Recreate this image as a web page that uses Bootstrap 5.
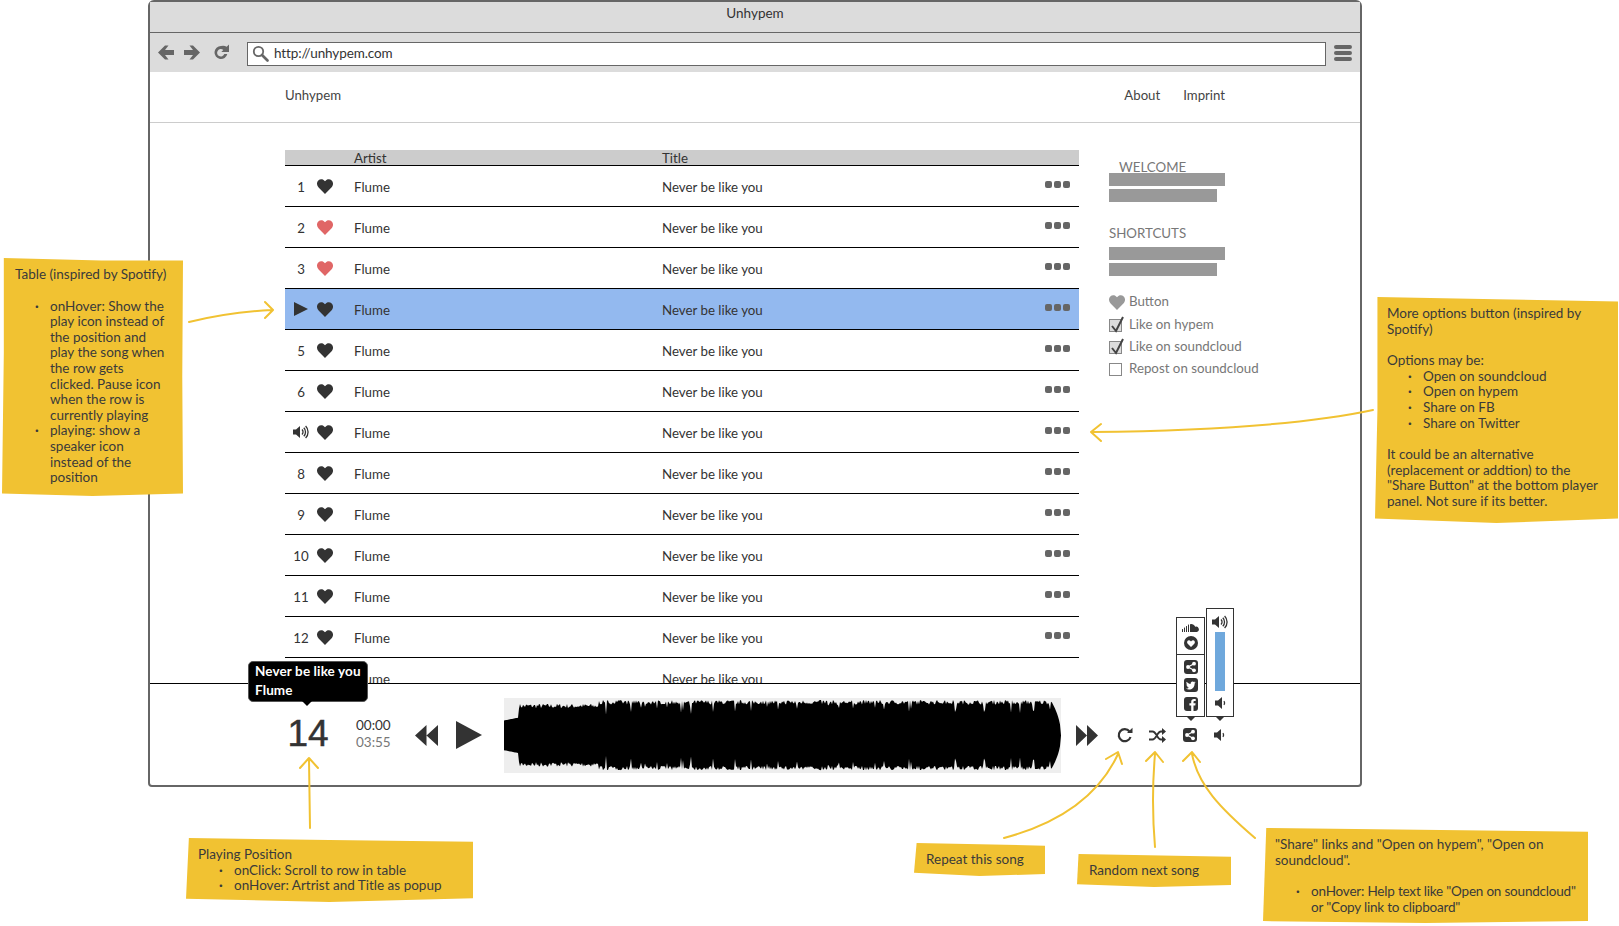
<!DOCTYPE html>
<html lang="en">
<head>
  <meta charset="UTF-8">
  <title>Unhypem</title>
  <link rel="stylesheet" href="https://cdn.jsdelivr.net/npm/bootstrap@5.3.3/dist/css/bootstrap.min.css">
  <style>
    html, body { margin: 0; background: #fff; overflow: hidden; }
    body, .wf-canvas { font-family: "Lato", "Liberation Sans", sans-serif; font-size: 13.5px; color: #333; }
    .wf-canvas { position: relative; width: 1619px; height: 926px; overflow: hidden; }

    /* browser window */
    .wf-window { position: absolute; left: 148px; top: 0; width: 1214px; height: 787px; border: 2px solid #666; border-radius: 6px 6px 4px 4px; background: #fff; }
    .wf-title { height: 31px; background: #dcdcdc; border-bottom: 1px solid #666; color: #333; padding-top: 1px; }
    .wf-toolbar { height: 39px; background: #dcdcdc; padding: 8px 8px 6px 8px; }
    .wf-url { width: 1080px; height: 24px; background: #fff; border: 1px solid #666; margin-left: 89px; }
    .wf-url span { line-height: 20px; letter-spacing: -.1px; margin: -2px 0 0 1px; }
    .wf-menu { margin-top: -2px; }
    .wf-nav { height: 51px; border-bottom: 1px solid #ccc; padding: 0 135px 2px; color: #555; font-size: 13.2px; }
    .wf-nav a { color: #444; text-decoration: none; }
    .wf-nav a + a { margin-left: 23px; }
    .wf-main { height: 560px; overflow: hidden; padding: 27px 0 0 135px; }
    .wf-tablewrap { width: 794px; flex: none; }

    .wf-table { width: 794px; table-layout: fixed; margin: 0; --bs-table-bg: transparent; color: #333; font-size: 13.3px; }
    .wf-table th { height: 15px; padding: 0; background: #ccc; font-weight: 400; line-height: 14px; border-bottom: 1px solid #000; vertical-align: bottom; color: #333; }
    .wf-table td { height: 41px; padding: 3px 0 0 0; border-bottom: 1px solid #000; vertical-align: middle; color: #333; line-height: 20px; }
    .wf-table tr.wf-hover td { background: #93b9ef; }
    .wf-table td svg { display: block; margin-top: -2px; }
    .wf-dots { display: flex; gap: 2px; justify-content: flex-end; padding-right: 9px; margin-top: -5px; }
    .wf-dots i { width: 7px; height: 7px; border-radius: 2px; background: #666; }
    .wf-pos { display: flex; justify-content: center; }

    .wf-side { width: 190px; margin-left: 30px; padding-top: 9px; color: #777; flex: none; font-size: 13.3px; }
    .wf-side p { margin: 0; line-height: 16px; }
    .wf-welcome { margin-left: 10px !important; }
    .wf-shortcuts { margin: 23px 0 6px !important; }
    .wf-bar { height: 13px; background: #999; margin-bottom: 3px; }
    .wf-bar.wf-long { width: 116px; }
    .wf-bar.wf-short { width: 108px; }
    .wf-bar.wf-first { margin-top: -2px; }
    .wf-check { height: 22px; gap: 7px; }
    .wf-check-first { margin-top: 15px; margin-bottom: 1px; gap: 4px; }
    .wf-box { width: 13px; height: 13px; border: 1px solid #888; background: #fff; position: relative; flex: none; }
    .wf-box.wf-on { background: #ddd; }
    .wf-box svg { position: absolute; left: 0; top: -4px; }

    /* player */
    .wf-player { position: relative; height: 102px; border-top: 1px solid #000; padding-left: 136px; }
    .wf-num { width: 44px; margin-top: 31px; font-size: 37px; line-height: 38px; color: #333; text-align: center; font-family: "Liberation Sans", sans-serif; -webkit-text-stroke: .5px #333; }
    .wf-times { width: 50px; margin: 33px 0 0 26px; line-height: 17px; text-align: left; }
    .wf-times div + div { color: #777; }
    .wf-rew { margin: 41px 18px 0 9px; }
    .wf-play { margin: 37px 22px 0 0; }
    .wf-wave { width: 557px; height: 75px; background: #eee; margin-top: 14px; flex: none; }
    .wf-ff { margin: 41px 0 0 15px; }
    .wf-tip { position: absolute; left: 98px; top: -23px; width: 120px; height: 41px; background: #000; border: 1px solid #555; border-radius: 5px; color: #fff; padding: 0 0 0 6px; line-height: 19px; font-weight: 700; font-size: 13.5px; letter-spacing: .12px; }
    .wf-tip::after { content: ""; position: absolute; left: 53px; bottom: -5px; border: 5px solid transparent; border-bottom: 0; border-top-color: #000; }
    .wf-pop { position: absolute; border: 1px solid #333; background: #fff; }
    .wf-pop::after { content: ""; position: absolute; left: 50%; margin-left: -5px; bottom: -5px; border: 5px solid transparent; border-bottom: 0; border-top-color: #333; }
    .wf-pop-share { left: 1026px; top: -67px; width: 29px; height: 100px; }
    .wf-pop-vol { left: 1056px; top: -76px; width: 28px; height: 109px; }
    .wf-pop-top { height: 37px; border-bottom: 1px solid #333; }
    .wf-volbar { width: 10px; height: 59px; background: #6fa8dc; margin: 23px auto 0; }
    .wf-icon { position: absolute; color: #333; }
    .wf-i1 { left: 8px; top: 11px; } .wf-i2 { left: 966px; top: 43px; } .wf-i3 { left: 999px; top: 44px; }
    .wf-i4 { left: 1033px; top: 44px; } .wf-i5 { left: 1064px; top: 44px; }
    .wf-p1 { left: 5px; top: 5px; } .wf-p2 { left: 7px; top: 18px; } .wf-p3 { left: 7px; top: 42px; }
    .wf-p4 { left: 7px; top: 60px; } .wf-p5 { left: 7px; top: 79px; }
    .wf-v1 { left: 5px; top: 6px; } .wf-v2 { left: 8px; top: 87px; }

    /* sticky notes */
    .wf-note { position: absolute; background: #f1c232; color: #3a3a3a; line-height: 15.6px; padding: 9px 10px; }
    .wf-note p { margin: 0; }
    .wf-note ul { list-style: none; margin: 0; padding: 0 0 0 36px; white-space: nowrap; }
    .wf-note li::before { content: "\00b7"; display: inline-block; width: 15px; margin-left: -15px; font-weight: 700; }
    .wf-gap { height: 16px; }
    .wf-note-table { left: 2px; top: 258px; width: 181px; height: 238px; padding-left: 13px; clip-path: polygon(1% 0, 55% 1%, 100% 1%, 99.6% 50%, 100% 99%, 50% 100%, 0 99%, 1% 40%); }
    .wf-note-table ul { padding-left: 35px; }
    .wf-note-more { left: 1375px; top: 297px; width: 243px; height: 226px; padding-left: 12px; clip-path: polygon(1% 0, 50% 1%, 100% 2%, 100% 50%, 100% 98%, 50% 100%, 0 98%, 1% 50%); }
    .wf-note-play { left: 186px; top: 838px; width: 287px; height: 64px; padding-left: 12px; clip-path: polygon(1% 0, 50% 3%, 100% 6%, 100% 94%, 50% 100%, 0 95%); }
    .wf-note-repeat { left: 914px; top: 843px; width: 131px; height: 33px; padding-left: 12px; clip-path: polygon(2% 0, 100% 8%, 100% 94%, 50% 100%, 0 90%); }
    .wf-note-random { left: 1077px; top: 854px; width: 154px; height: 33px; padding-left: 12px; clip-path: polygon(1% 0, 100% 8%, 100% 94%, 50% 100%, 0 92%); }
    .wf-note-share { left: 1263px; top: 828px; width: 325px; height: 95px; padding-left: 12px; clip-path: polygon(1% 0, 100% 4%, 100% 98%, 50% 100%, 0 98%); }
    .wf-note-share li { letter-spacing: -.2px; }

    .wf-arrows { position: absolute; left: 0; top: 0; pointer-events: none; }
    .wf-arrows path { fill: none; stroke: #f1c232; stroke-width: 2; stroke-linecap: round; stroke-linejoin: round; }
  </style>
</head>
<body>
  <svg width="0" height="0" class="position-absolute">
    <defs>
      <symbol id="i-heart" viewBox="0 0 16 15"><path d="M8 15 1.600 8.600C-.5 6.400-.5 3.200 1.300 1.400 3.100-.4 6.100-.4 8 2.200 9.900-.4 12.900-.4 14.700 1.400 16.500 3.200 16.500 6.400 14.400 8.600Z"/></symbol>
      <symbol id="i-speaker" viewBox="0 0 16 14"><path d="M0 4.500h3L7 1v12L3 9.500H0Z"/><path d="M9 4.500a3.500 3.500 0 0 1 0 5M10.800 2.800a6 6 0 0 1 0 8.400M12.600 1a8.500 8.500 0 0 1 0 12" fill="none" stroke="currentColor" stroke-width="1.300"/></symbol>
      <symbol id="i-low" viewBox="0 0 12 14"><path d="M0 4.500h3L7 1v12L3 9.500H0Z"/><path d="M8.800 5.200a2.500 2.500 0 0 1 0 3.600" fill="none" stroke="currentColor" stroke-width="1.300"/></symbol>
      <symbol id="i-share" viewBox="0 0 14 14"><rect width="14" height="14" rx="3"/><circle cx="4" cy="7" r="1.900" fill="#fff"/><circle cx="10" cy="3.700" r="1.900" fill="#fff"/><circle cx="10" cy="10.300" r="1.900" fill="#fff"/><path d="M4 7l6-3.300M4 7l6 3.300" stroke="#fff" stroke-width="1.100" fill="none"/></symbol>
      <symbol id="i-twitter" viewBox="0 0 14 14"><rect width="14" height="14" rx="3"/><path d="M11.500 4.300c-.4.200-.8.300-1.100.3.400-.2.700-.6.900-1-.4.200-.8.400-1.300.5a2 2 0 0 0-3.400 1.800C5 5.800 3.600 5 2.600 3.800c-.5.900-.3 2 .6 2.700-.3 0-.6-.1-.9-.2 0 1 .7 1.800 1.600 2-.3.100-.6.100-.9 0 .3.800 1 1.300 1.900 1.400-.9.700-1.900 1-3 .9 3.600 2.100 8.800.2 8.700-5.200.4-.3.700-.6.900-.9Z" fill="#fff"/></symbol>
      <symbol id="i-fb" viewBox="0 0 14 14"><rect width="14" height="14" rx="3"/><path d="M9.500 14V8.500h1.800l.3-2.200H9.500V5c0-.7.200-1.100 1.100-1.100h1.100V2C11.500 2 10.800 1.900 10 1.900 8.400 1.900 7.200 2.900 7.200 4.700v1.600H5.400v2.200h1.800V14Z" fill="#fff"/></symbol>
    </defs>
  </svg>

  <div class="wf-canvas">
    <div class="wf-window">
      <div class="wf-title text-center">Unhypem</div>
      <div class="wf-toolbar d-flex align-items-center position-relative">
        <svg class="wf-icon wf-i1" width="72" height="17" viewBox="0 0 72 17" fill="#666">
          <path d="M0 8.500 7 1.500h3.500L7 6h9v5H7l3.500 4.500H7Z"/>
          <path d="M42 8.500 35 1.500h-3.500L35 6h-9v5h9l-3.500 4.500H35Z"/>
          <path d="M63 2a6.500 6.500 0 1 0 6.300 8h-3a3.700 3.700 0 1 1-1-4l-2 2H71V0.500l-2.300 2.300A6.500 6.500 0 0 0 63 2Z"/>
        </svg>
        <div class="wf-url d-flex align-items-center">
          <svg class="ms-1 me-1" width="17" height="17" viewBox="0 0 17 17" fill="none" stroke="#666"><circle cx="6.500" cy="6.500" r="4.700" stroke-width="1.800"/><path d="M10 10l5.500 5.500" stroke-width="2.600" stroke-linecap="round"/></svg>
          <span>http://unhypem.com</span>
        </div>
        <svg class="ms-2 wf-menu" width="18" height="16" viewBox="0 0 18 16" fill="#666"><rect width="18" height="4" y="0" rx="2"/><rect width="18" height="4" y="6" rx="2"/><rect width="18" height="4" y="12" rx="2"/></svg>
      </div>
      <nav class="wf-nav d-flex align-items-center justify-content-between">
        <a href="#">Unhypem</a>
        <div class="d-flex">
          <a href="#">About</a>
          <a href="#">Imprint</a>
        </div>
      </nav>
      <div class="wf-main d-flex">
        <div class="wf-tablewrap">
          <table class="table wf-table">
            <colgroup><col style="width:32px"><col style="width:37px"><col style="width:308px"><col style="width:340px"><col></colgroup>
            <thead><tr><th></th><th></th><th>Artist</th><th>Title</th><th></th></tr></thead>
            <tbody id="rows"></tbody>
          </table>
        </div>
        <div class="wf-side">
          <p class="wf-welcome">WELCOME</p>
          <div class="wf-bar wf-long wf-first"></div>
          <div class="wf-bar wf-short"></div>
          <p class="wf-shortcuts">SHORTCUTS</p>
          <div class="wf-bar wf-long"></div>
          <div class="wf-bar wf-short"></div>
          <div class="d-flex align-items-center wf-check wf-check-first">
            <svg width="16" height="15" fill="#999"><use href="#i-heart"/></svg><span>Button</span>
          </div>
          <div class="d-flex align-items-center wf-check"><div class="wf-box wf-on"><svg width="15" height="17" viewBox="0 0 15 17" fill="none" stroke="#444" stroke-width="2"><path d="M2 10l4 5 7-14"/></svg></div><span>Like on hypem</span></div>
          <div class="d-flex align-items-center wf-check"><div class="wf-box wf-on"><svg width="15" height="17" viewBox="0 0 15 17" fill="none" stroke="#444" stroke-width="2"><path d="M2 10l4 5 7-14"/></svg></div><span>Like on soundcloud</span></div>
          <div class="d-flex align-items-center wf-check"><div class="wf-box"></div><span>Repost on soundcloud</span></div>
        </div>
      </div>
      <div class="wf-player d-flex">
        <div class="wf-num">14</div>
        <div class="wf-times"><div>00:00</div><div>03:55</div></div>
        <svg class="wf-rew" width="23" height="21" viewBox="0 0 23 21" fill="#333"><path d="M11.500 0v21L0 10.500ZM23 0v21L11.500 10.500Z"/></svg>
        <svg class="wf-play" width="26" height="28" viewBox="0 0 26 28" fill="#333"><path d="M0 0 26 14 0 28Z"/></svg>
        <svg class="wf-wave" viewBox="0 0 557 75"><path id="wavePath" fill="#000"/></svg>
        <svg class="wf-ff" width="22" height="21" viewBox="0 0 22 21" fill="#333"><path d="M0 0 11 10.500 0 21ZM11 0 22 10.500 11 21Z"/></svg>

        <svg class="wf-icon wf-i2" width="17" height="17" viewBox="0 0 17 17" fill="none" stroke="#333"><path d="M13.500 4.500A6 6 0 1 0 14.500 10" stroke-width="2.200"/><path d="M11 6h5.500V.8Z" fill="#333" stroke="none"/></svg>
        <svg class="wf-icon wf-i3" width="17" height="15" viewBox="0 0 17 15" fill="none" stroke="#333" stroke-width="1.800"><path d="M0 3.500h3.500C7.500 3.500 8 11.500 12 11.500h2M0 11.500h3.500C7.500 11.500 8 3.500 12 3.500h2"/><path d="M13 0l4 3.500-4 3.500ZM13 8l4 3.500-4 3.500Z" fill="#333" stroke="none"/></svg>
        <svg class="wf-icon wf-i4" width="14" height="14" fill="#333"><use href="#i-share"/></svg>
        <svg class="wf-icon wf-i5" width="12" height="14" fill="#333"><use href="#i-low"/></svg>

        <div class="wf-pop wf-pop-share">
          <div class="wf-pop-top">
            <svg class="wf-icon wf-p1" width="18" height="9" viewBox="0 0 18 9" fill="#333"><path d="M0 9V6.500c0-.6 1-.6 1 0V9ZM2 9V5c0-.6 1-.6 1 0v4ZM4 9V3.500c0-.6 1-.6 1 0V9ZM6 9V2c0-.6 1-.6 1 0v7ZM8 9V1.300a4 4 0 0 1 5.200 2.500A2.700 2.700 0 1 1 15 9Z"/></svg>
            <svg class="wf-icon wf-p2" width="14" height="14" viewBox="0 0 14 14"><circle cx="7" cy="7" r="7" fill="#333"/><path d="M7 11 3.500 7.400C2.500 6 3.600 4 5.200 4.200 6 4.300 6.700 4.800 7 5.400 7.300 4.800 8 4.300 8.800 4.200 10.400 4 11.500 6 10.500 7.400Z" fill="#fff"/></svg>
          </div>
          <svg class="wf-icon wf-p3" width="14" height="14" fill="#333"><use href="#i-share"/></svg>
          <svg class="wf-icon wf-p4" width="14" height="14" fill="#333"><use href="#i-twitter"/></svg>
          <svg class="wf-icon wf-p5" width="14" height="14" fill="#333"><use href="#i-fb"/></svg>
        </div>
        <div class="wf-pop wf-pop-vol">
          <svg class="wf-icon wf-v1" width="16" height="14" fill="#333"><use href="#i-speaker"/></svg>
          <div class="wf-volbar"></div>
          <svg class="wf-icon wf-v2" width="12" height="14" fill="#333"><use href="#i-low"/></svg>
        </div>

        <div class="wf-tip"><div>Never be like you</div><div>Flume</div></div>
      </div>
    </div>

    <svg class="wf-arrows" width="1619" height="926" viewBox="0 0 1619 926">
      <path d="M189 322Q230 312 272 310M265 302 273 310 265 318"/>
      <path d="M1373 410Q1280 430 1092 432M1101 424 1091 432 1101 441"/>
      <path d="M310 828 309 760M300 768 309 758 318 768"/>
      <path d="M1004 838Q1090 815 1118 754M1106 759 1118 752 1122 764"/>
      <path d="M1155 847Q1151 800 1155 754M1146 761 1155 752 1163 762"/>
      <path d="M1255 838C1220 808 1198 785 1192 754M1183 761 1192 752 1200 762"/>
    </svg>

    <div class="wf-note wf-note-table">
      <p>Table (inspired by Spotify)</p>
      <div class="wf-gap"></div>
      <ul>
        <li>onHover: Show the<br>play icon instead of<br>the position and<br>play the song when<br>the row gets<br>clicked. Pause icon<br>when the row is<br>currently playing</li>
        <li>playing: show a<br>speaker icon<br>instead of the<br>position</li>
      </ul>
    </div>
    <div class="wf-note wf-note-more">
      <p>More options button (inspired by Spotify)</p>
      <div class="wf-gap"></div>
      <p>Options may be:</p>
      <ul>
        <li>Open on soundcloud</li>
        <li>Open on hypem</li>
        <li>Share on FB</li>
        <li>Share on Twitter</li>
      </ul>
      <div class="wf-gap"></div>
      <p>It could be an alternative (replacement or addtion) to the "Share Button" at the bottom player panel. Not sure if its better.</p>
    </div>
    <div class="wf-note wf-note-play">
      <p>Playing Position</p>
      <ul>
        <li>onClick: Scroll to row in table</li>
        <li>onHover: Artrist and Title as popup</li>
      </ul>
    </div>
    <div class="wf-note wf-note-repeat"><p>Repeat this song</p></div>
    <div class="wf-note wf-note-random"><p>Random next song</p></div>
    <div class="wf-note wf-note-share">
      <p>"Share" links and "Open on hypem", "Open on soundcloud".</p>
      <div class="wf-gap"></div>
      <ul>
        <li>onHover: Help text like "Open on soundcloud"<br>or "Copy link to clipboard"</li>
      </ul>
    </div>
  </div>

  <script src="https://cdn.jsdelivr.net/npm/bootstrap@5.3.3/dist/js/bootstrap.bundle.min.js"></script>
  <script>
// table rows
const heartColor = { 2: '#e06666', 3: '#e06666' };
let html = '';
for (let i = 1; i <= 13; i++) {
  let pos = i;
  if (i === 4) pos = '<svg width="14" height="14" viewBox="0 0 14 14" fill="#333"><path d="M0 0 14 7 0 14Z"/></svg>';
  if (i === 7) pos = '<svg width="16" height="14" fill="#333"><use href="#i-speaker"/></svg>';
  // last row is cut by the player, its dots don't show
  const dots = i < 13 ? '<div class="wf-dots"><i></i><i></i><i></i></div>' : '';
  html += `<tr class="${i === 4 ? 'wf-hover' : ''}">
    <td><div class="wf-pos">${pos}</div></td>
    <td><svg width="16" height="15" fill="${heartColor[i] || '#333'}"><use href="#i-heart"/></svg></td>
    <td>Flume</td>
    <td>Never be like you</td>
    <td>${dots}</td>
  </tr>`;
}
document.getElementById('rows').innerHTML = html;

// waveform, seeded so it stays the same between runs
let seed = 7;
function rnd() { seed = (seed * 16807) % 2147483647; return seed / 2147483647; }
function amp(x) {
  if (x < 15) return 15 + x * 0.2;
  if (x < 95) return 27 + rnd() * 5;
  if (x >= 548) return 33 * Math.sqrt(Math.max(0, (557 - x) / 9));
  return 31 + rnd() * 4.5 - (rnd() > 0.9 ? rnd() * 12 : 0);
}
const upper = [], lower = [];
for (let x = 0; x <= 557; x++) {
  const a = amp(x);
  upper.push(`${x},${(37.5 - a).toFixed(1)}`);
  lower.unshift(`${x},${(37.5 + a * 0.98).toFixed(1)}`);
}
document.getElementById('wavePath').setAttribute('d', 'M' + upper.concat(lower).join('L') + 'Z');
  </script>
</body>
</html>
